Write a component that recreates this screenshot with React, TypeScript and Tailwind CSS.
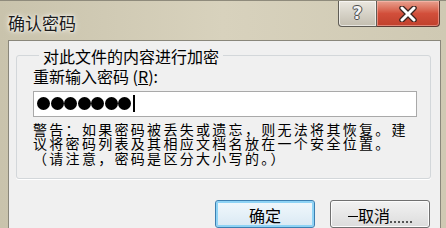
import React from 'react';

// Win7 style "confirm password" dialog
export default function App() {
  const dots = [0, 1, 2, 3, 4, 5, 6];

  return (
    <div className="w-[446px] h-[228px] overflow-hidden flex flex-col bg-gradient-to-r from-[#c9c3ac] via-[#d8d2bd] to-[#cfc9b3] font-['Noto_Sans_CJK_SC',sans-serif] text-black">
      {/* Title bar */}
      <div className="h-[42px] flex justify-between items-start border-t border-[#8f8b7c]">
        <div className="pl-[8px] pt-[11px] text-[17px] leading-[22px] text-[#1c1c1c] [text-shadow:0_0_6px_#fff,0_0_3px_#fff]">
          确认密码
        </div>
        <div className="flex mr-[6px]">
          <div className="w-[39px] h-[26px] flex items-center justify-center rounded-bl-[4px] border border-t-0 border-[#5f5c55] bg-gradient-to-b from-[#ebe8e0] via-[#d6d2c7] to-[#c3beb0] shadow-[inset_0_0_0_1px_rgba(255,255,255,0.6)]">
            <span className="text-[17px] font-bold leading-none text-[#f4f4f4] font-['DejaVu_Sans',sans-serif] [text-shadow:0_0_1px_#333,1px_0_0_#555,-1px_0_0_#555,0_1px_0_#555,0_-1px_0_#555]">
              ?
            </span>
          </div>
          <div className="w-[63px] h-[26px] flex items-center justify-center rounded-br-[4px] border border-t-0 border-l-0 border-[#5f3a33] bg-gradient-to-b from-[#e7a08f] via-[#d24f3b] to-[#c0402c] shadow-[inset_0_0_0_1px_rgba(255,200,190,0.5)]">
            <svg width="20" height="16" viewBox="0 0 20 16">
              <path d="M4 2 L16 14 M16 2 L4 14" stroke="#3a2420" strokeWidth="5.5" strokeLinecap="round" />
              <path d="M4 2 L16 14 M16 2 L4 14" stroke="#ffffff" strokeWidth="3" strokeLinecap="round" />
            </svg>
          </div>
        </div>
      </div>

      {/* Client area */}
      <div className="flex-1 flex pl-[8px] pr-[5px]">
        <div className="flex-1 flex flex-col bg-[#f0f0f0] border-l border-t border-r border-[#8a877b]">
          <fieldset className="mt-[6px] ml-[7px] mr-[9px] pl-[16px] pr-[13px] pb-[13px] border border-[#d3d7da] rounded-[3px] shadow-[0_1px_0_#fff]">
            <legend className="ml-[6px] px-[4px] text-[16px] leading-[18px]">对此文件的内容进行加密</legend>
            <div className="mt-[2px] text-[16px] leading-[18px]">
              重新输入密码 (<span className="underline">R</span>):
            </div>
            <div className="mt-[6px] h-[26px] border border-[#a9a9a9] bg-white flex items-center pl-[3px] gap-[0.5px]">
              {dots.map(d => (
                <span key={d} className="w-[13px] h-[13px] rounded-full bg-black" />
              ))}
              <span className="ml-[1px] w-[2px] h-[17px] bg-black" />
            </div>
            <div className="mt-[5px] text-[14px] leading-[14.5px] tracking-[2.3px] whitespace-nowrap">
              <div>警告：如果密码被丢失或遗忘，则无法将其恢复。建</div>
              <div>议将密码列表及其相应文档名放在一个安全位置。</div>
              <div>（请注意，密码是区分大小写的。）</div>
            </div>
          </fieldset>

          <div className="mt-[21px] mr-[10px] flex justify-end gap-[15px]">
            <button className="w-[100px] h-[28px] rounded-[3px] border border-[#3c7fb1] bg-gradient-to-b from-[#f2f8fc] to-[#d9e9f4] shadow-[inset_0_0_0_2px_#8fd3f5] text-[16px] leading-[20px] flex justify-center pt-[4px]">
              确定
            </button>
            <button className="w-[100px] h-[28px] rounded-[3px] border border-[#707070] bg-gradient-to-b from-[#f2f2f2] to-[#dcdcdc] shadow-[inset_0_0_0_1px_#fcfcfc] text-[16px] leading-[20px] flex justify-center items-start pt-[4px]">
              <span className="mt-[11px] w-[10px] border-b border-black" />
              取消
              <span className="mt-[16px] w-[22px] border-b-2 border-dotted border-[#555]" />
            </button>
          </div>
        </div>
      </div>
    </div>
  );
}
